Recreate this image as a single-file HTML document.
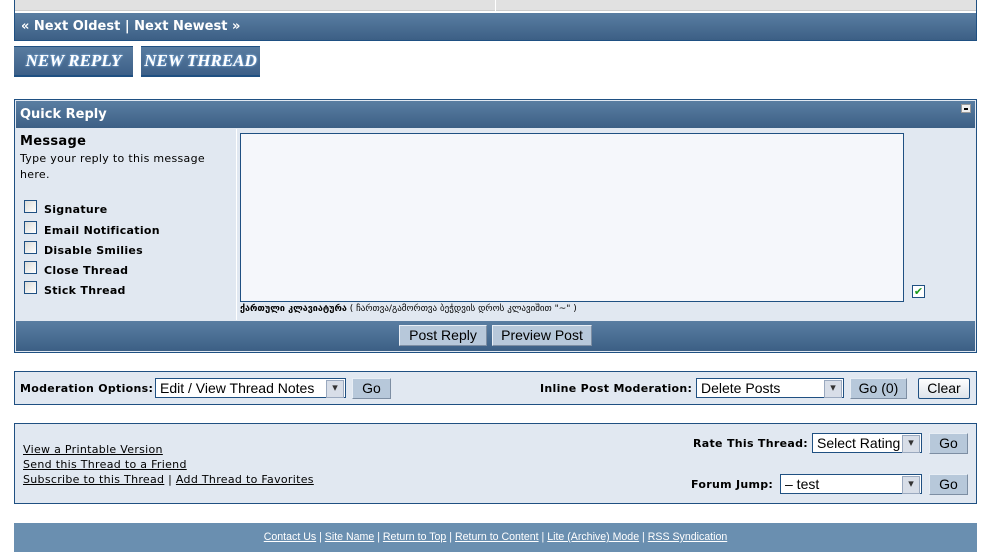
<!DOCTYPE html>
<html><head><meta charset="utf-8"><style>
*{box-sizing:border-box;margin:0;padding:0}
body{width:998px;height:559px;background:#fff;font-family:Verdana,"DejaVu Sans",sans-serif;position:relative;overflow:hidden;font-size:11px;color:#000}
.a{position:absolute}
.hdr{background:linear-gradient(#5a7ea2,#3c5f85);color:#fff;font-weight:bold}
.box{border:1px solid #1f5082;background:#e1e8f1}
.sel{position:absolute;background:#fff;border:1px solid #1f5082;font-family:"Liberation Sans",sans-serif;font-size:14px;padding-left:4px;line-height:18px;height:20px}
.sel:after{content:"▾";position:absolute;right:1px;top:1px;width:16px;height:16px;background:#d8dee8;border:1px solid #9aa9bf;font-size:11px;line-height:15px;text-align:center;color:#333}
.btn{position:absolute;background:#b7c8da;border:1px solid;border-color:#e8eef5 #7d8ea3 #7d8ea3 #e8eef5;font-family:"Liberation Sans",sans-serif;font-size:14px;text-align:center;line-height:19px;height:21px}
.cb{position:absolute;width:13px;height:13px;border:1px solid #1f5082;background:linear-gradient(135deg,#dcdcd8,#fff)}
.lbl{position:absolute;font-weight:bold;font-size:11px;letter-spacing:0.3px}
.sp{letter-spacing:0.3px}
u{color:#000}
.ft a{color:#fff;text-decoration:underline}
</style></head><body>
<div class="a" style="left:14px;top:0;width:963px;height:41px;border:1px solid #1f5082;border-top:none;background:#fff"></div>
<div class="a" style="left:15px;top:0;width:961px;height:11px;background:#e1e1e1;border-bottom:1px solid #ccc"></div>
<div class="a" style="left:495px;top:0;width:1px;height:11px;background:#fff"></div>
<div class="a hdr" style="left:15px;top:13px;width:961px;height:27px;font-size:13px;line-height:27px;padding-left:6px">« Next Oldest | Next Newest »</div>
<div class="a" style="left:14px;top:46px;width:119px;height:31px;background:linear-gradient(#587ca0,#3d6088);border-top:1px solid #1f5082;border-bottom:2px solid #1f5082;color:#fff;font:italic bold 17px 'Liberation Serif',serif;text-align:center;line-height:28px;text-shadow:0 0 2px #9cf">NEW REPLY</div>
<div class="a" style="left:141px;top:46px;width:119px;height:31px;background:linear-gradient(#587ca0,#3d6088);border-top:1px solid #1f5082;border-bottom:2px solid #1f5082;color:#fff;font:italic bold 17px 'Liberation Serif',serif;text-align:center;line-height:28px;text-shadow:0 0 2px #9cf">NEW THREAD</div>

<div class="a box" style="left:14px;top:99px;width:963px;height:254px"></div>
<div class="a hdr" style="left:16px;top:101px;width:959px;height:27px;font-size:13px;line-height:27px;padding-left:4px">Quick Reply</div>
<div class="a" style="left:961px;top:104px;width:10px;height:9px;background:#eee;border:1px solid #999"><div style="margin:3px 2px;height:2px;background:#000"></div></div>
<div class="a" style="left:236px;top:129px;width:1px;height:191px;background:#fff"></div>
<div class="a sp" style="left:20px;top:134px;font-size:13px;font-weight:bold">Message</div>
<div class="a sp" style="left:20px;top:151px;width:205px;line-height:16px">Type your reply to this message here.</div>
<div class="cb" style="left:24px;top:200px"></div><div class="lbl" style="left:44px;top:203px">Signature</div>
<div class="cb" style="left:24px;top:221px"></div><div class="lbl" style="left:44px;top:224px">Email Notification</div>
<div class="cb" style="left:24px;top:241px"></div><div class="lbl" style="left:44px;top:244px">Disable Smilies</div>
<div class="cb" style="left:24px;top:261px"></div><div class="lbl" style="left:44px;top:264px">Close Thread</div>
<div class="cb" style="left:24px;top:281px"></div><div class="lbl" style="left:44px;top:284px">Stick Thread</div>
<div class="a" style="left:240px;top:133px;width:664px;height:169px;background:#f5f7fb;border:1px solid #1f5082"></div>
<div class="a" style="left:912px;top:285px;width:13px;height:13px;border:1px solid #1f5082;background:#fff;color:#1a9a1a;font-size:11px;line-height:11px;text-align:center;font-weight:bold">✔</div>
<div class="a" style="left:240px;top:304px;font-size:9px;font-family:'DejaVu Sans',sans-serif"><b>ქართული კლავიატურა</b> ( ჩართვა/გამორთვა ბეჭდვის დროს კლავიშით "~" )</div>
<div class="a hdr" style="left:16px;top:321px;width:959px;height:30px"></div>
<div class="btn" style="left:399px;top:325px;width:88px">Post Reply</div>
<div class="btn" style="left:492px;top:325px;width:100px">Preview Post</div>

<div class="a box" style="left:14px;top:371px;width:963px;height:34px"></div>
<div class="lbl" style="left:20px;top:382px">Moderation Options:</div>
<div class="sel" style="left:155px;top:378px;width:191px">Edit / View Thread Notes</div>
<div class="btn" style="left:352px;top:378px;width:39px">Go</div>
<div class="lbl" style="left:540px;top:382px">Inline Post Moderation:</div>
<div class="sel" style="left:696px;top:378px;width:148px">Delete Posts</div>
<div class="btn" style="left:850px;top:378px;width:57px">Go (0)</div>
<div class="btn" style="left:918px;top:378px;width:52px;background:linear-gradient(#fff,#dde3ea);border:1px solid #1f5082;border-radius:2px">Clear</div>

<div class="a box" style="left:14px;top:423px;width:963px;height:81px"></div>
<div class="a sp" style="left:23px;top:442px;line-height:15px"><u>View a Printable Version</u><br><u>Send this Thread to a Friend</u><br><u>Subscribe to this Thread</u> | <u>Add Thread to Favorites</u></div>
<div class="lbl" style="left:693px;top:437px">Rate This Thread:</div>
<div class="sel" style="left:812px;top:433px;width:110px">Select Rating</div>
<div class="btn" style="left:929px;top:433px;width:39px">Go</div>
<div class="lbl" style="left:691px;top:478px">Forum Jump:</div>
<div class="sel" style="left:780px;top:474px;width:142px">– test</div>
<div class="btn" style="left:929px;top:474px;width:39px">Go</div>

<div class="a ft" style="left:14px;top:523px;width:963px;height:29px;background:#6a8fb0;color:#fff;font-family:'Liberation Sans',sans-serif;font-size:10.6px;text-align:center;line-height:29px"><a>Contact Us</a> | <a>Site Name</a> | <a>Return to Top</a> | <a>Return to Content</a> | <a>Lite (Archive) Mode</a> | <a>RSS Syndication</a></div>
</body></html>
